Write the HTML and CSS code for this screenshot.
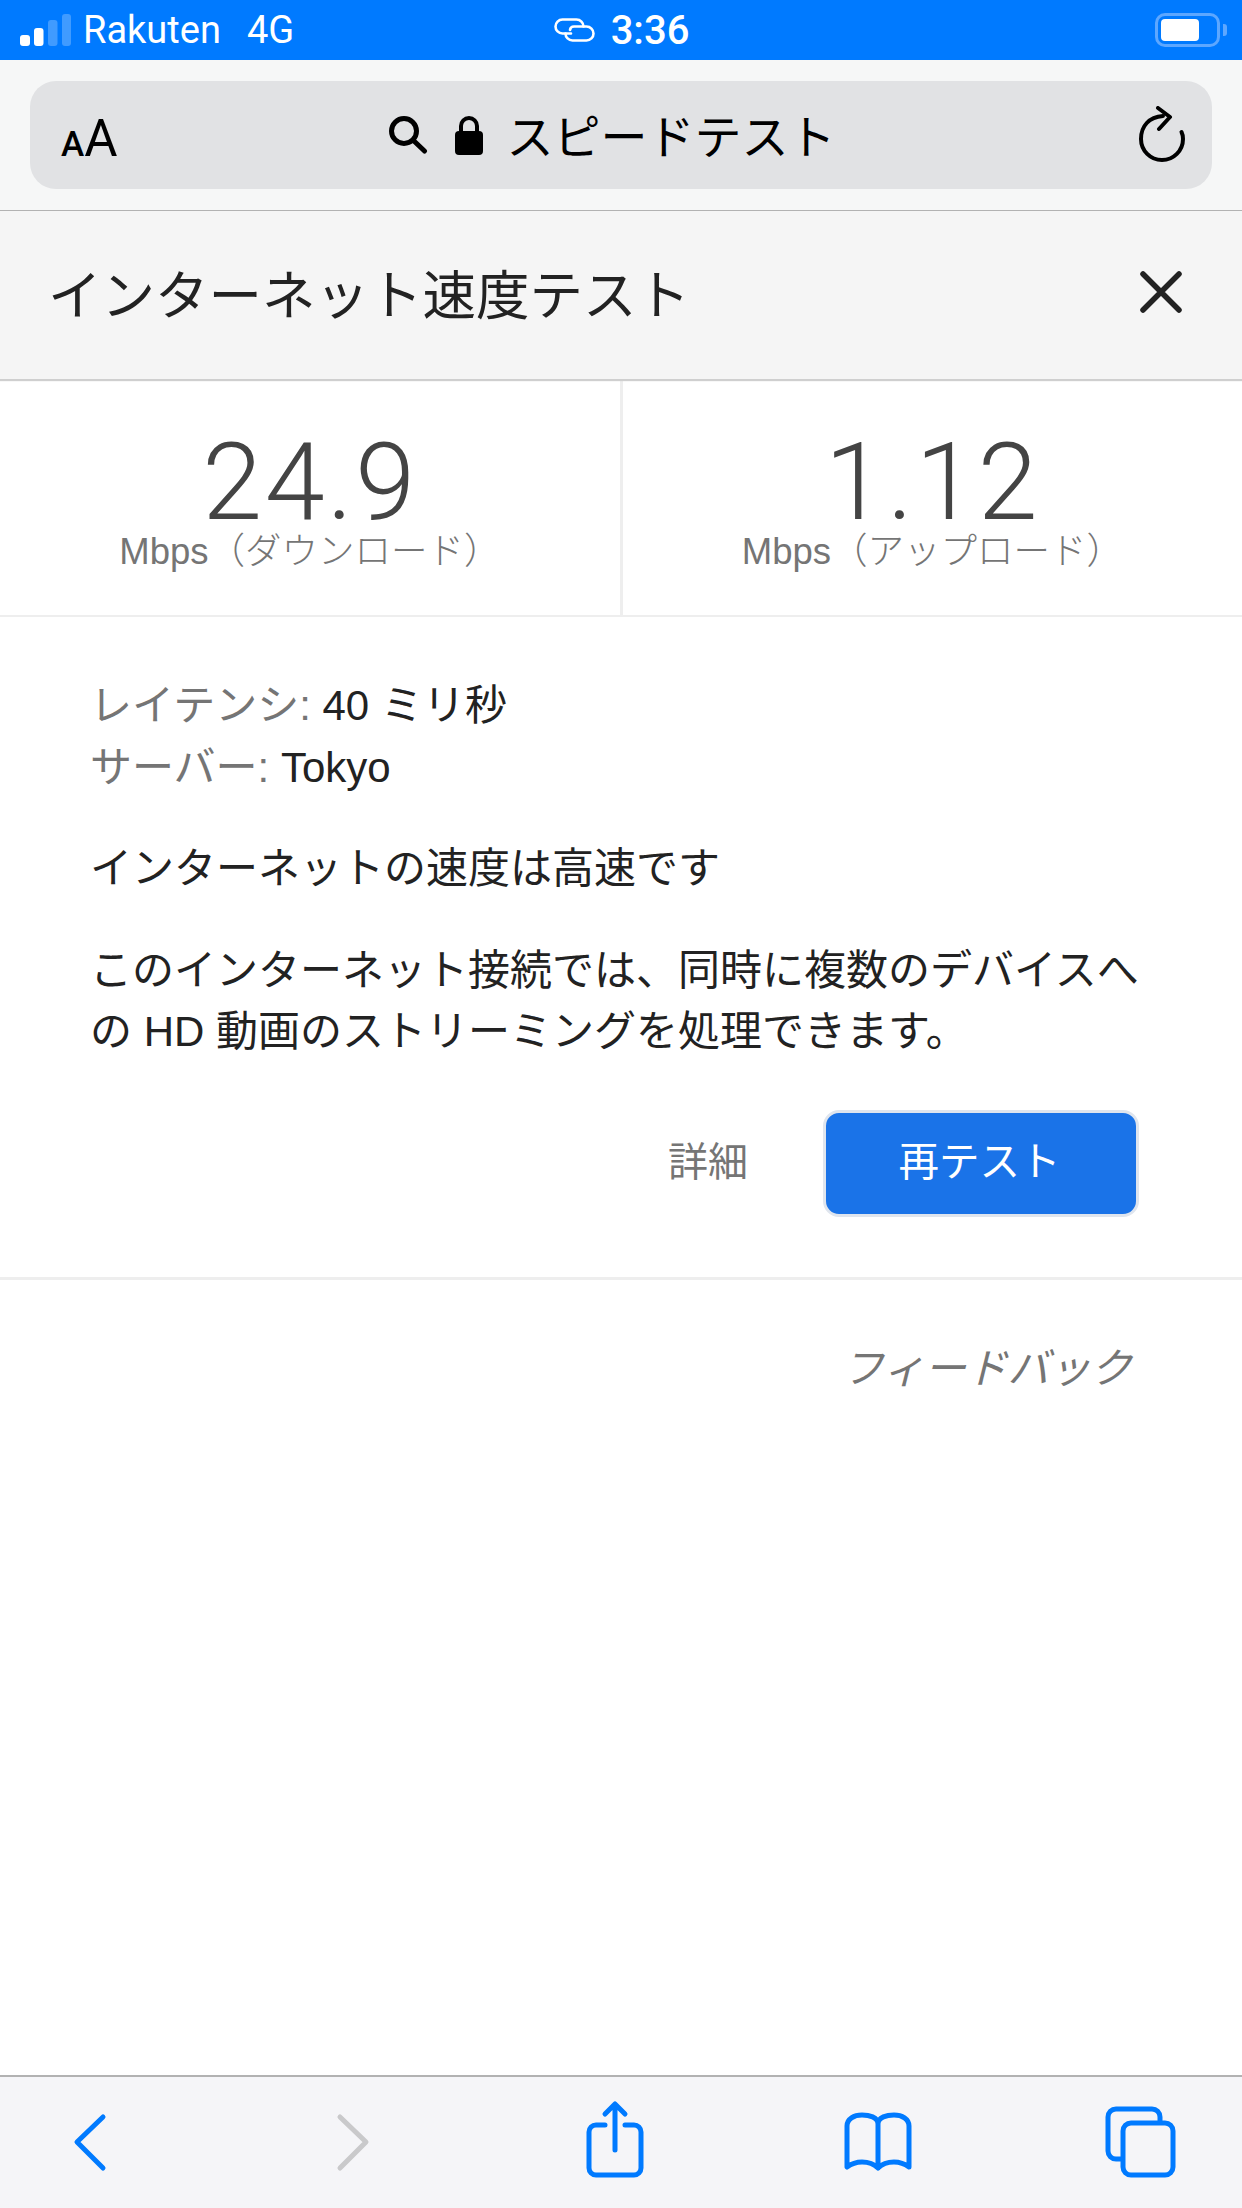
FILE: index.html
```html
<!DOCTYPE html>
<html lang="ja">
<head>
<meta charset="utf-8">
<title>スピードテスト</title>
<link rel="stylesheet" href="styles.css">
</head>
<body>
<div class="status">
  <div class="status-left">
    <svg class="signal" width="52" height="32" viewBox="0 0 52 32">
      <rect x="0" y="21" width="10" height="11" rx="3" fill="#fff"/>
      <rect x="14" y="14" width="9.5" height="18" rx="3" fill="#fff"/>
      <rect x="28" y="6" width="9.5" height="26" rx="3" fill="#fff" fill-opacity=".25"/>
      <rect x="42" y="0" width="9" height="32" rx="3" fill="#fff" fill-opacity=".25"/>
    </svg>
    <span class="carrier">Rakuten</span>
    <span class="network">4G</span>
  </div>
  <div class="status-center">
    <svg width="41" height="24" viewBox="0 0 41 24" fill="none" stroke="#fff" stroke-width="2.6" stroke-linecap="round">
      <path d="M17 15.500H8.500a7 7 0 0 1 0-14h14a7 7 0 0 1 7 7"/>
      <path d="M11.500 15.500a7 7 0 0 0 7 7h14a7 7 0 0 0 0-14H20a4 4 0 0 0-4 3.500"/>
    </svg>
    <span class="time">3:36</span>
  </div>
  <div class="status-right">
    <span class="battery"><span class="battery-fill"></span></span>
    <span class="battery-nub"></span>
  </div>
</div>

<div class="toolbar">
  <div class="url">
    <span class="aa"><span class="aa-small">A</span><span class="aa-big">A</span></span>
    <div class="url-center">
      <svg width="40" height="40" viewBox="0 0 40 40" fill="none" stroke="#000" stroke-width="5" stroke-linecap="round">
        <circle cx="16" cy="16" r="12.5"/>
        <path d="M26 26l10.500 10"/>
      </svg>
      <svg class="lock" width="30" height="40" viewBox="0 0 30 40">
        <path d="M7 18V11a8 8 0 0 1 16 0v7" fill="none" stroke="#000" stroke-width="4"/>
        <rect x="1" y="16" width="28" height="24" rx="4" fill="#000"/>
      </svg>
      <span class="url-text">スピードテスト</span>
    </div>
    <svg class="reload" width="48" height="56" viewBox="0 0 48 56" fill="none" stroke="#000" stroke-width="4" stroke-linecap="round" stroke-linejoin="round">
      <path d="M25 10C11 11 3 20 3 33a21 21 0 0 0 42 0c0-3-.5-5-1.500-7"/>
      <path d="M20 2l12 9-11 12"/>
    </svg>
  </div>
</div>

<div class="header">
  <h1 class="title">インターネット速度テスト</h1>
  <svg class="close" width="44" height="44" viewBox="0 0 44 44" stroke="#222" stroke-width="5.500" stroke-linecap="round">
    <path d="M4 4l36 36M40 4L4 40"/>
  </svg>
</div>

<div class="stats">
  <div class="stat">
    <div class="stat-value">24.9</div>
    <div class="stat-label">Mbps（ダウンロード）</div>
  </div>
  <div class="stat stat-second">
    <div class="stat-value">1.12</div>
    <div class="stat-label">Mbps（アップロード）</div>
  </div>
</div>

<div class="result">
  <div class="info"><span class="muted">レイテンシ:</span> 40 ミリ秒</div>
  <div class="info"><span class="muted">サーバー:</span> Tokyo</div>
  <p class="speed">インターネットの速度は高速です</p>
  <p class="desc">このインターネット接続では、同時に複数のデバイスへの HD 動画のストリーミングを処理できます。</p>
  <div class="actions">
    <span class="details">詳細</span>
    <span class="retest">再テスト</span>
  </div>
</div>

<div class="feedback-row">
  <span class="feedback">フィードバック</span>
</div>

<div class="bottom">
  <svg width="80" height="80" viewBox="0 0 80 80" fill="none" stroke="#007aff" stroke-width="5" stroke-linecap="round" stroke-linejoin="round">
    <path d="M53 17L27 42l26 26"/>
  </svg>
  <svg width="80" height="80" viewBox="0 0 80 80" fill="none" stroke="#c9c9cb" stroke-width="5" stroke-linecap="round" stroke-linejoin="round">
    <path d="M27 17l26 25-26 26"/>
  </svg>
  <svg width="80" height="80" viewBox="0 0 80 80" fill="none" stroke="#007aff" stroke-width="5" stroke-linecap="round" stroke-linejoin="round">
    <path d="M30 25h-9a7 7 0 0 0-7 7v36a7 7 0 0 0 7 7h38a7 7 0 0 0 7-7V32a7 7 0 0 0-7-7h-9"/>
    <path d="M40 50V5M30 14l10-10 10 10"/>
  </svg>
  <svg width="80" height="80" viewBox="0 0 80 80" fill="none" stroke="#007aff" stroke-width="5" stroke-linecap="round" stroke-linejoin="round">
    <path d="M40 24v44c-4-4-10-6-16-6-5 0-11 2-15 5V26c0-7 7-11 15-11 7 0 16 2 16 9c0-7 9-9 16-9 8 0 15 4 15 11v41c-4-3-10-5-15-5-6 0-12 2-16 6z"/>
  </svg>
  <svg width="80" height="80" viewBox="0 0 80 80" fill="none" stroke="#007aff" stroke-width="5" stroke-linejoin="round">
    <rect x="23" y="23" width="50" height="52" rx="8"/>
    <path d="M23 59h-7a8 8 0 0 1-8-8V17a8 8 0 0 1 8-8h36a8 8 0 0 1 8 8v6"/>
  </svg>
</div>
</body>
</html>
```

FILE: styles.css
```css
* { box-sizing: border-box; }
html, body { margin: 0; padding: 0; }
body {
  width: 1242px;
  height: 2208px;
  display: flex;
  flex-direction: column;
  background: #fff;
  overflow: hidden;
  font-family: "Liberation Sans", "Noto Sans CJK JP", sans-serif;
  color: #222;
}
svg { display: block; flex: none; }

.status {
  height: 60px;
  background: #007aff;
  color: #fff;
  display: grid;
  grid-template-columns: 1fr auto 1fr;
  align-items: center;
  padding: 0 15px 0 20px;
  font-family: Roboto, "Noto Sans CJK JP", sans-serif;
}
.status-left { display: flex; align-items: center; font-size: 38px; }
.carrier { margin-left: 11px; }
.network { margin-left: 26px; }
.status-center { display: flex; align-items: center; gap: 16px; margin-left: -4px; }
.time { font-size: 40px; font-weight: 500; }
.status-right { display: flex; justify-content: flex-end; align-items: center; gap: 3px; }
.battery {
  width: 65px;
  height: 34px;
  border: 3px solid #5da7ff;
  border-radius: 10px;
  padding: 3px;
  display: block;
}
.battery-fill {
  display: block;
  width: 38px;
  height: 22px;
  background: #fff;
  border-radius: 4px;
}
.battery-nub {
  width: 4px;
  height: 12px;
  background: #5da7ff;
  border-radius: 0 3px 3px 0;
}

.toolbar {
  height: 151px;
  background: #f6f7f7;
  border-bottom: 1px solid #b2b2b2;
  padding: 21px 30px 20px 30px;
}
.url {
  height: 108px;
  background: #e1e2e4;
  border-radius: 26px;
  display: flex;
  align-items: center;
  padding: 0 26px 0 31px;
  position: relative;
}
.aa {
  font-family: Roboto, sans-serif;
  color: #000;
  display: flex;
  align-items: baseline;
  line-height: 1;
  width: 60px;
  margin-top: 6px;
}
.aa-small { font-size: 35px; font-weight: 500; }
.aa-big { font-size: 51px; }
.url-center {
  flex: 1;
  display: flex;
  align-items: center;
  justify-content: center;
  margin-left: -36px;
  color: #000;
}
.lock { margin-left: 26px; }
.url-text {
  margin-left: 23px;
  font-family: "Noto Sans CJK JP", sans-serif;
  font-size: 47px;
  font-weight: 400;
  line-height: 1;
  margin-top: -3px;
}
.reload { margin-top: -2px; }

.header {
  height: 168px;
  background: #f5f5f5;
  display: flex;
  align-items: center;
  justify-content: space-between;
  padding: 0 59px 0 48px;
  box-shadow: 0 2px 1px #cfcfcf;
  position: relative;
}
.title {
  margin: -8px 0 0;
  font-family: "Noto Sans CJK JP", sans-serif;
  font-size: 53.500px;
  font-weight: 400;
  color: #222;
}
.close { margin-top: -6px; }

.stats {
  height: 236px;
  margin-top: 2px;
  display: flex;
  border-bottom: 2px solid #eeeeee;
}
.stat {
  width: 620px;
  display: flex;
  flex-direction: column;
  align-items: center;
  padding-top: 49px;
}
.stat-second {
  width: 622px;
  border-left: 3px solid #eeeeee;
}
.stat-value {
  font-family: Roboto, sans-serif;
  font-weight: 300;
  font-size: 108px;
  letter-spacing: 2.500px;
  line-height: 104px;
  color: #444;
}
.stat-label {
  font-family: "Liberation Sans", "Noto Sans CJK JP", sans-serif;
  font-size: 36.500px;
  line-height: 36px;
  color: #757575;
  font-weight: 300;
}

.result {
  padding: 58px 100px 60px 90px;
  border-bottom: 3px solid #eeeeee;
  font-size: 42px;
  line-height: 61.500px;
  color: #222;
}
.info { height: 62px; }
.muted { color: #757575; }
.speed { margin: 39px 0 0; }
.desc { margin: 40px 0 0; }
.actions {
  margin: 47px 3px 0 0;
  display: flex;
  justify-content: flex-end;
  align-items: center;
  gap: 75px;
}
.details {
  font-size: 40px;
  color: #757575;
}
.retest {
  width: 316px;
  height: 107px;
  background: #1a73e8;
  border: 3px solid #dfe5ee;
  border-radius: 16px;
  color: #fff;
  font-size: 40.500px;
  display: flex;
  align-items: center;
  justify-content: center;
  padding-right: 3px;
}

.feedback-row {
  flex: 1;
  padding: 58px 110px 0 0;
  display: flex;
  justify-content: flex-end;
  align-items: flex-start;
}
.feedback {
  font-style: italic;
  font-size: 41.500px;
  line-height: 62px;
  color: #757575;
}

.bottom {
  height: 133px;
  background: #f5f5f8;
  border-top: 2px solid #b2b2b2;
  display: flex;
  justify-content: space-between;
  align-items: flex-start;
  padding: 23px 62px 0 50px;
}
```
